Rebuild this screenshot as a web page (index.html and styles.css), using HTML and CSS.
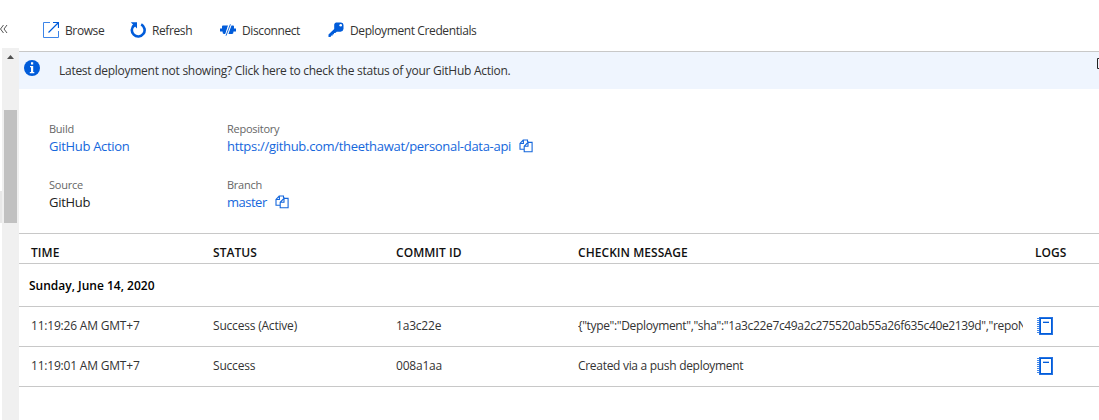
FILE: index.html
```html
<!DOCTYPE html>
<html lang="en">
<head>
<meta charset="utf-8">
<title>Deployment Center</title>
<link rel="stylesheet" href="styles.css">
</head>
<body>
<svg class="defs" width="0" height="0">
  <symbol id="copy" viewBox="0 0 14 14">
    <path d="M8.5 3V1H4.2L1 4.4V10.3H4.8M4.4 1V4.5H1M9 3.4H13.1V12.8H5.2V7.3L9 3.4V7.3H5.2" fill="none" stroke="#1567dc" stroke-width="1.1"/>
  </symbol>
  <symbol id="log" viewBox="0 0 16 18">
    <path d="M0 1.5H3M0 3.5H3M0 5.5H3M0 7.5H3M0 9.5H3M0 11.5H3M0 13.5H3M0 15.5H3" stroke="#3f86ea"/>
    <path d="M2 0H16V18H2z" fill="#2673e2"/>
    <path d="M3 1H15V17H3z" fill="#015cda"/>
    <path d="M4 2H14V16H4z" fill="#fff"/>
    <path d="M6 4.5H12" stroke="#a9c9f5"/>
    <path d="M6 5.5H12" stroke="#015cda"/>
  </symbol>
</svg>
<div class="page">
  <aside class="gutter">
    <div class="collapse">
      <svg width="8" height="10" viewBox="0 0 8 10"><path d="M3.5 1L.5 5L3.5 9M7 1L4 5L7 9" fill="none" stroke="#555"/></svg>
    </div>
    <div class="scroll-area">
      <div class="edge"><div class="edge-mark"></div></div>
      <div class="track">
        <svg class="up" width="7" height="4" viewBox="0 0 7 4"><path d="M3.5 0L7 4H0z" fill="#505050"/></svg>
        <div class="thumb"></div>
      </div>
    </div>
  </aside>
  <main class="content">
    <nav class="toolbar">
      <a class="tool browse">
        <svg width="16" height="16" viewBox="0 0 16 16" fill="none"><path d="M7 .5H.5V15.5H15.5V9" stroke="#3d85e8"/><path d="M10 .5H15.5V6M5.5 10.5L15 1" stroke="#015cda" stroke-width="1.2"/></svg>
        <span>Browse</span></a>
      <a class="tool refresh">
        <svg width="16" height="16" viewBox="0 0 16 16" fill="none"><path d="M11.2 2.4A6.4 6.4 0 1 1 4.3 3" stroke="#015cda" stroke-width="2.6"/><path d="M.8 .3H7V6.4L5 4.6L3.6 6L2 4.2L3.2 2.8z" fill="#015cda"/></svg>
        <span>Refresh</span></a>
      <a class="tool disconnect">
        <svg width="16" height="12" viewBox="0 0 16 12"><path d="M0 4.5H2V2.5Q2 1.5 3 1.5H8L5.5 10H4Q2.5 10 2.5 7.5H0zM16 4.5H14V2.5Q14 1.5 13 1.5H11L8 10H12Q13.5 10 13.5 7.5H16z" fill="#015cda"/><path d="M9.3 0L5 12M11.5 0L7.2 12" stroke="#fff" stroke-width=".9"/><path d="M10.4 .3L6 11.7" stroke="#015cda" stroke-width=".9"/></svg>
        <span>Disconnect</span></a>
      <a class="tool credentials">
        <svg width="16" height="16" viewBox="0 0 16 16"><path d="M8 .5H13Q15.5 .8 15.5 3V7Q15 9.7 12.5 9.7H8.8L7.3 11H6V12.3H4.7V13.6H3.4L2.5 15H.5V12.4L6.2 7V2.5Q6.5 .8 8 .5z" fill="#015cda"/><circle cx="12.7" cy="3.3" r="1.3" fill="#fff"/></svg>
        <span>Deployment Credentials</span></a>
    </nav>
    <div class="banner">
      <svg width="16" height="16" viewBox="0 0 16 16"><circle cx="8" cy="8" r="8" fill="#015cda"/><path d="M7 2.3H9.2V4.5H7zM6 6H9.2V12H10.3V13.2H5.8V12H7V7.2H6z" fill="#fff"/></svg>
      <span class="banner-text">Latest deployment not showing? Click here to check the status of your GitHub Action.</span>
      <svg class="popout" width="2" height="11" viewBox="0 0 2 11"><path d="M2 .5H.5V10.5H2" fill="none" stroke="#222"/></svg>
    </div>
    <section class="details">
      <div class="field"><div class="label">Build</div><div class="value link">GitHub Action</div></div>
      <div class="field"><div class="label">Repository</div><div class="value link"><span>https://github.com/theethawat/personal-data-api</span><svg width="14" height="14"><use href="#copy"/></svg></div></div>
      <div class="field"><div class="label">Source</div><div class="value">GitHub</div></div>
      <div class="field"><div class="label">Branch</div><div class="value link"><span class="branch">master</span><svg width="14" height="14"><use href="#copy"/></svg></div></div>
    </section>
    <section class="table">
      <div class="row head"><span>TIME</span><span>STATUS</span><span>COMMIT ID</span><span>CHECKIN MESSAGE</span><span>LOGS</span></div>
      <div class="group">Sunday, June 14, 2020</div>
      <div class="row"><span class="time">11:19:26 AM GMT+7</span><span>Success (Active)</span><span>1a3c22e</span><span class="message">{"type":"Deployment","sha":"1a3c22e7c49a2c275520ab55a26f635c40e2139d","repoN</span><span class="logs"><svg width="16" height="18"><use href="#log"/></svg></span></div>
      <div class="row"><span class="time">11:19:01 AM GMT+7</span><span>Success</span><span>008a1aa</span><span class="message short">Created via a push deployment</span><span class="logs"><svg width="16" height="18"><use href="#log"/></svg></span></div>
    </section>
  </main>
</div>
</body>
</html>
```
FILE: styles.css
```css
* { box-sizing: border-box; }
body { margin: 0; background: #fff; color: #333; font: 12px/16px "Open Sans", "Noto Sans", sans-serif; letter-spacing: -0.2px; overflow: hidden; }
svg { display: block; flex: none; }
.defs { position: absolute; }
.page { display: flex; height: 420px; }
.gutter { width: 19px; flex: none; display: flex; flex-direction: column; }
.collapse { height: 48px; padding-top: 24px; }
.scroll-area { flex: 1; display: flex; }
.edge { width: 2px; padding-top: 143px; }
.edge-mark { height: 32px; background: #e8e8e8; }
.track { width: 17px; background: #f0f0f0; padding: 7px 2px 0; }
.up { margin-left: 3px; }
.thumb { height: 113px; margin-top: 51px; background: #c1c1c1; }
.content { flex: 1; min-width: 0; }
.toolbar { height: 52px; border-bottom: 1px solid #c8c8c8; padding: 10px 0 0 24px; display: flex; letter-spacing: -0.39px; }
.tool { display: flex; align-items: center; height: 40px; gap: 6px; }
.tool span { padding-top: 2px; }
.browse { width: 87px; }
.refresh { width: 90px; }
.disconnect { width: 108px; }
.banner { height: 37px; background: #eff5fe; display: flex; padding: 8px 0 0 5px; }
.banner-text { margin: 3px 0 0 19px; letter-spacing: -0.27px; }
.popout { margin: -2px 0 0 auto; }
.details { height: 144px; padding: 32px 0 0 30px; display: grid; grid-template-columns: 178px 1fr; grid-template-rows: 56px 56px; }
.label { color: #666; font-size: 11px; letter-spacing: -0.25px; }
.value { color: #222; font-size: 13px; line-height: 18px; letter-spacing: -0.3px; display: flex; align-items: center; gap: 8px; }
.link { color: #1567dc; }
.branch { letter-spacing: -0.5px; }
.table { border-top: 1px solid #c8c8c8; }
.row { display: grid; grid-template-columns: 182px 183px 182px 457px 1fr; height: 40px; align-items: center; padding: 0 0 1px 12px; border-bottom: 1px solid #c8c8c8; }
.head { height: 30px; padding: 8px 0 0 12px; font-weight: 600; color: #111; letter-spacing: 0.05px; }
.group { height: 43px; padding: 14px 0 0 10px; border-bottom: 1px solid #c8c8c8; font-weight: 600; color: #000; letter-spacing: 0; }
.message { overflow: hidden; white-space: nowrap; width: 445px; letter-spacing: -0.35px; }
.short { letter-spacing: -0.3px; }
.logs { padding-left: 2px; }
```
